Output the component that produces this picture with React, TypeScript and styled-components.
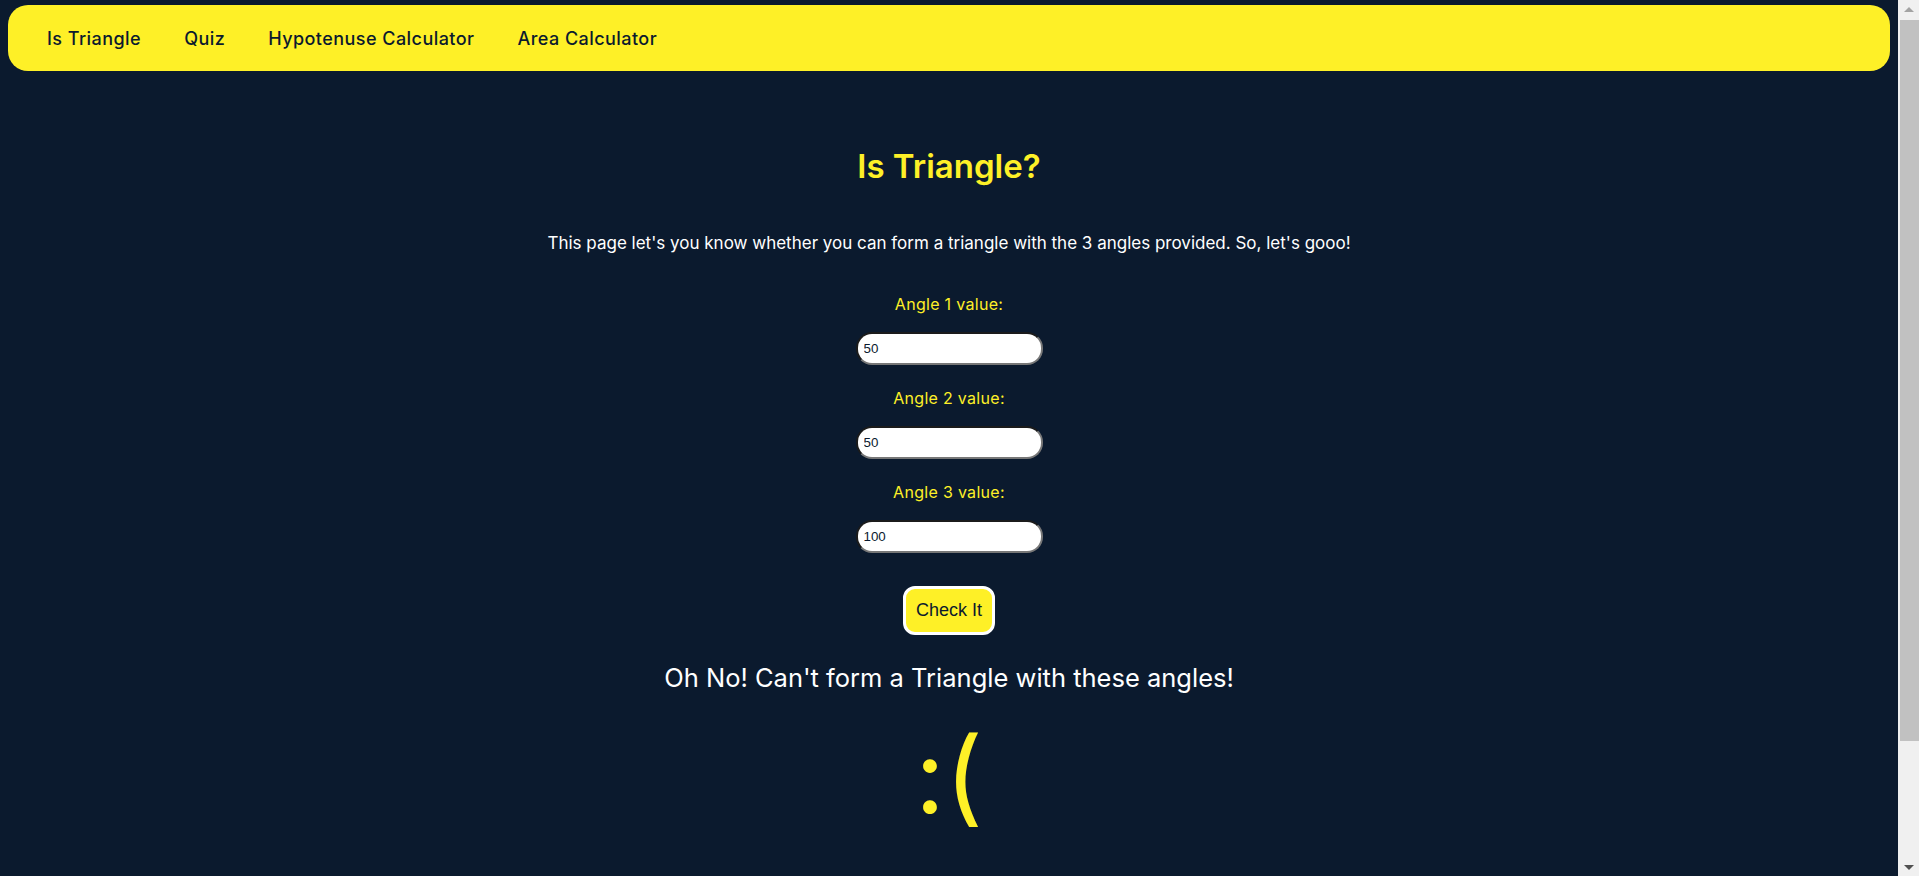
import React, { useState } from "react";
import styled, { createGlobalStyle } from "styled-components";

const BG = "#0b1a2e";
const YELLOW = "#fef027";
const FONT = `Inter, "Open Sans", "Noto Sans", sans-serif`;

const Global = createGlobalStyle`
  html, body { margin: 0; padding: 0; }
  body {
    background: ${BG};
    font-family: ${FONT};
    min-height: 1019px;
    padding-right: 21px;
  }
  * { box-sizing: border-box; }
`;

/* Imitation of the browser's classic scrollbar seen in the screenshot; it overlays the page edge. */
const ScrollTrack = styled.div`
  position: fixed;
  top: 0;
  right: 0;
  width: 21px;
  height: 100vh;
  background: #f0f0f0;
  display: flex;
  flex-direction: column;
  align-items: stretch;
`;

const ScrollArrow = styled.div<{ $down?: boolean }>`
  height: 18px;
  display: flex;
  align-items: center;
  justify-content: center;
  &::before {
    content: "";
    width: 0;
    height: 0;
    border-left: 5px solid transparent;
    border-right: 5px solid transparent;
    ${(p) =>
      p.$down
        ? "border-top: 5px solid #505050;"
        : "border-bottom: 5px solid #a3a3a3;"}
  }
`;

const ScrollThumb = styled.div`
  margin: 2px 0 0 2px;
  height: 721px;
  background: #c1c1c1;
`;

const ScrollSpacer = styled.div`
  flex: 1;
`;

const Nav = styled.nav`
  margin: 5px 8px 0;
  height: 66px;
  border-radius: 20px;
  background: ${YELLOW};
  display: flex;
  align-items: center;
  padding-left: 39px;
  gap: 43px;
`;

const NavLink = styled.a`
  color: ${BG};
  font-family: ${FONT};
  font-size: 18px;
  letter-spacing: 0.45px;
  font-weight: 500;
  text-decoration: none;
  cursor: pointer;
`;

const Main = styled.main`
  display: flex;
  flex-direction: column;
  align-items: center;
  padding-top: 71px;
`;

const Title = styled.h1`
  margin: 0;
  color: ${YELLOW};
  font-size: 33px;
  font-weight: 600;
  line-height: 48px;
`;

const Description = styled.p`
  margin: 41px 0 0;
  color: #ffffff;
  font-size: 17px;
  line-height: 24px;
`;

const Field = styled.div`
  display: flex;
  flex-direction: column;
  align-items: center;
`;

const Label = styled.label<{ $first?: boolean }>`
  color: ${YELLOW};
  font-size: 16px;
  letter-spacing: 0.3px;
  line-height: 24px;
  margin-top: ${(p) => (p.$first ? "37px" : "21px")};
`;

const Input = styled.input`
  margin-top: 16px;
  width: 187px;
  height: 33px;
  border-radius: 16px;
  background: #ffffff;
  border-style: solid;
  border-width: 2px;
  border-color: #1b1b1b #777777 #777777 #1b1b1b;
  padding: 0 6px;
  font-family: Arial, "Liberation Sans", sans-serif;
  font-size: 13.33px;
  color: #0b1a2e;
  outline: none;
`;

const Button = styled.button`
  margin-top: 33px;
  background: ${YELLOW};
  border: 3px solid #ffffff;
  border-radius: 12px;
  padding: 0 10px;
  height: 49px;
  font-family: Arial, "Liberation Sans", sans-serif;
  font-size: 18px;
  color: ${BG};
  cursor: pointer;
`;

const Result = styled.p`
  margin: 27px 0 0;
  color: #ffffff;
  font-size: 25.5px;
  line-height: 32px;
`;

const Face = styled.div`
  margin-top: 26px;
  color: ${YELLOW};
  font-size: 104px;
  line-height: 110px;
`;

export default function App() {
  const [a, setA] = useState("50");
  const [b, setB] = useState("50");
  const [c, setC] = useState("100");
  return (
    <>
      <Global />
      <Nav>
        <NavLink>Is Triangle</NavLink>
        <NavLink>Quiz</NavLink>
        <NavLink>Hypotenuse Calculator</NavLink>
        <NavLink>Area Calculator</NavLink>
      </Nav>
      <Main>
        <Title>Is Triangle?</Title>
        <Description>
          This page let's you know whether you can form a triangle with the 3 angles provided. So, let's gooo!
        </Description>
        <Field>
          <Label $first>Angle 1 value:</Label>
          <Input value={a} onChange={(e) => setA(e.target.value)} />
        </Field>
        <Field>
          <Label>Angle 2 value:</Label>
          <Input value={b} onChange={(e) => setB(e.target.value)} />
        </Field>
        <Field>
          <Label>Angle 3 value:</Label>
          <Input value={c} onChange={(e) => setC(e.target.value)} />
        </Field>
        <Button>Check It</Button>
        <Result>Oh No! Can't form a Triangle with these angles!</Result>
        <Face>:(</Face>
      </Main>
      <ScrollTrack aria-hidden="true">
        <ScrollArrow />
        <ScrollThumb />
        <ScrollSpacer />
        <ScrollArrow $down />
      </ScrollTrack>
    </>
  );
}
